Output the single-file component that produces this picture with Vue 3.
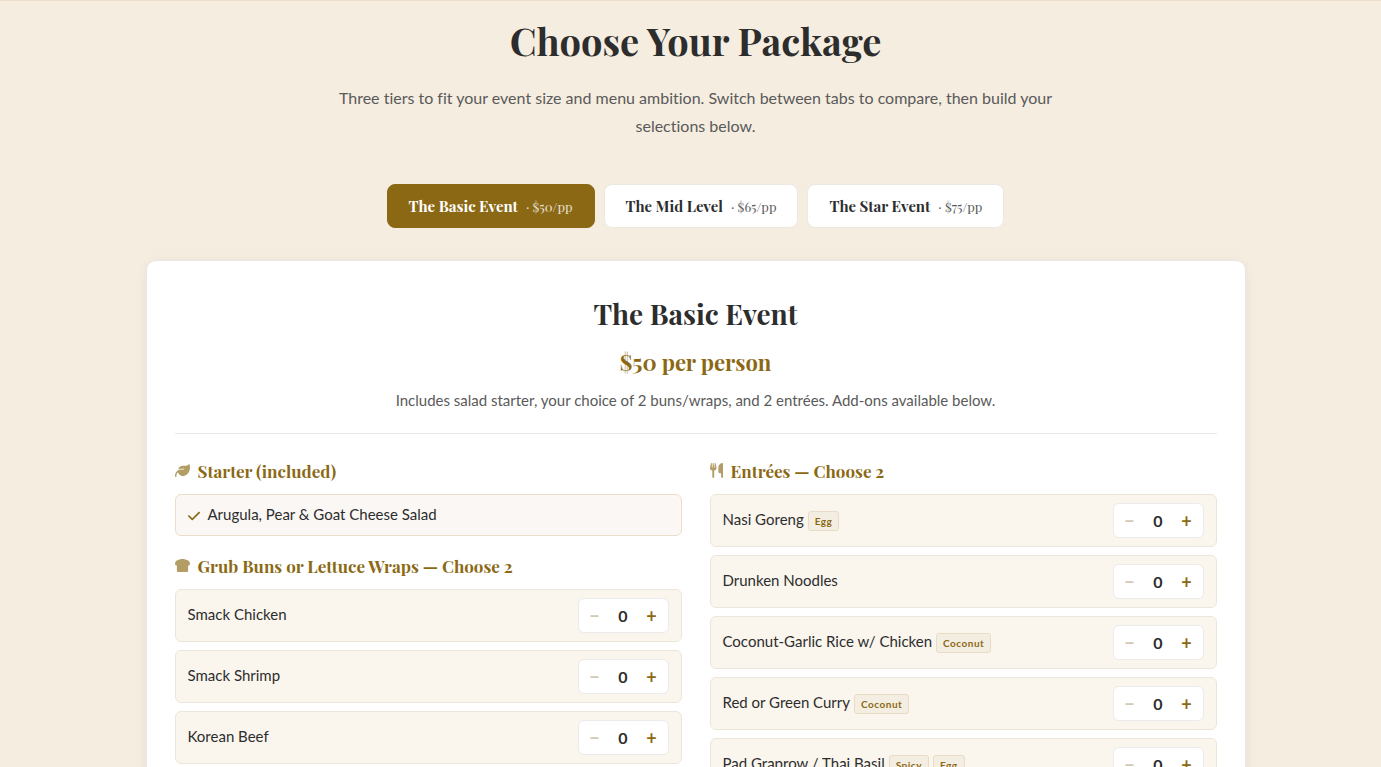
<script setup>
import { ref, computed } from 'vue';

// Packages shown in the tabs
const packages = [
  { id: 'basic', name: 'The Basic Event', price: 50 },
  { id: 'mid', name: 'The Mid Level', price: 65 },
  { id: 'star', name: 'The Star Event', price: 75 },
];

const activeId = ref('basic');
const activePackage = computed(() => packages.find((p) => p.id === activeId.value));

// Menu items with the quantity picked so far
const buns = ref([
  { name: 'Smack Chicken', qty: 0 },
  { name: 'Smack Shrimp', qty: 0 },
  { name: 'Korean Beef', qty: 0 },
]);

const entrees = ref([
  { name: 'Nasi Goreng', tags: ['Egg'], qty: 0 },
  { name: 'Drunken Noodles', tags: [], qty: 0 },
  { name: 'Coconut-Garlic Rice w/ Chicken', tags: ['Coconut'], qty: 0 },
  { name: 'Red or Green Curry', tags: ['Coconut'], qty: 0 },
  { name: 'Pad Graprow / Thai Basil', tags: ['Spicy', 'Egg'], qty: 0 },
]);

// Each list allows two choices
const isFull = (list) => list.reduce((sum, item) => sum + item.qty, 0) >= 2;
</script>

<template>
  <section class="packages">
    <header class="intro">
      <h1>Choose Your Package</h1>
      <p>Three tiers to fit your event size and menu ambition. Switch between tabs to compare, then build your selections below.</p>
    </header>

    <!-- Package tabs -->
    <div class="tabs" role="tablist">
      <button
        v-for="pkg in packages"
        :key="pkg.id"
        type="button"
        role="tab"
        class="tab"
        :class="{ active: pkg.id === activeId }"
        :aria-selected="pkg.id === activeId"
        @click="activeId = pkg.id"
      >
        <span>{{ pkg.name }}</span>
        <span class="tab-price">· ${{ pkg.price }}/pp</span>
      </button>
    </div>

    <div class="card">
      <div class="card-header">
        <h2>{{ activePackage.name }}</h2>
        <div class="price">${{ activePackage.price }} per person</div>
        <p>Includes salad starter, your choice of 2 buns/wraps, and 2 entrées. Add-ons available below.</p>
      </div>

      <div class="columns">
        <!-- Starter and buns -->
        <div class="column">
          <h3>
            <svg class="icon" viewBox="0 0 512 512" aria-hidden="true">
              <path d="M272 96c-78.6 0-145.1 51.5-167.7 122.5c33.6-17 71.5-26.5 111.7-26.5h88c8.8 0 16 7.2 16 16s-7.2 16-16 16H216c-16.6 0-32.7 1.9-48.3 5.4c-25.9 5.9-49.9 16.4-71.4 30.7C38.3 298.8 0 364.9 0 440v16c0 13.3 10.7 24 24 24s24-10.7 24-24V440c0-48.7 20.7-92.5 53.8-123.2C121.6 392.3 190.3 448 272 448l1 0c132.1-.7 239-130.9 239-291.4c0-42.6-7.5-83.1-21.1-119.6c-2.6-6.9-12.7-6.6-16.2-.1C455.9 72.1 418.7 96 376 96L272 96z" />
            </svg>
            Starter (included)
          </h3>
          <div class="included">
            <svg class="check" viewBox="0 0 448 512" aria-hidden="true">
              <path d="M438.6 105.4c12.5 12.5 12.5 32.8 0 45.3l-256 256c-12.5 12.5-32.8 12.5-45.3 0l-128-128c-12.5-12.5-12.5-32.8 0-45.3s32.8-12.5 45.3 0L160 338.7 393.4 105.4c12.5-12.5 32.8-12.5 45.3 0z" />
            </svg>
            <span>Arugula, Pear &amp; Goat Cheese Salad</span>
          </div>

          <h3>
            <svg class="icon" viewBox="0 0 512 512" aria-hidden="true">
              <path d="M256 32C192 32 0 64 0 192c0 35.3 28.7 64 64 64V432c0 26.5 21.5 48 48 48H400c26.5 0 48-21.5 48-48V256c35.3 0 64-28.7 64-64C512 64 320 32 256 32z" />
            </svg>
            Grub Buns or Lettuce Wraps — Choose 2
          </h3>
          <ul class="items">
            <li v-for="item in buns" :key="item.name" class="item">
              <span class="item-name">{{ item.name }}</span>
              <div class="stepper">
                <button type="button" :disabled="item.qty === 0" :aria-label="'Remove ' + item.name" @click="item.qty--">−</button>
                <span class="qty">{{ item.qty }}</span>
                <button type="button" :aria-label="'Add ' + item.name" :disabled="isFull(buns)" @click="item.qty++">+</button>
              </div>
            </li>
          </ul>
        </div>

        <!-- Entrées -->
        <div class="column">
          <h3>
            <svg class="icon icon-narrow" viewBox="0 0 448 512" aria-hidden="true">
              <path d="M416 0C400 0 288 32 288 176V288c0 35.3 28.7 64 64 64h32V480c0 17.7 14.3 32 32 32s32-14.3 32-32V32c0-17.7-14.3-32-32-32zM64 16C64 7.8 57.9 1 49.7 .1S34.2 4.6 32.4 12.5L2.1 148.8C.7 155.1 0 161.5 0 167.9c0 45.9 35.1 83.6 80 87.7V480c0 17.7 14.3 32 32 32s32-14.3 32-32V255.6c44.9-4.1 80-41.8 80-87.7c0-6.4-.7-12.8-2.1-19.1L191.6 12.5c-1.8-8-9.3-13.3-17.4-12.4S160 7.8 160 16V150.2c0 5.4-4.4 9.8-9.8 9.8c-5.1 0-9.3-3.9-9.8-9L127.9 14.6C127.2 6.3 120.3 0 112 0s-15.2 6.3-15.9 14.6L83.7 151c-.5 5.1-4.7 9-9.8 9c-5.4 0-9.8-4.4-9.8-9.8V16z" />
            </svg>
            Entrées — Choose 2
          </h3>
          <ul class="items">
            <li v-for="item in entrees" :key="item.name" class="item">
              <div class="item-info">
                <span class="item-name">{{ item.name }}</span>
                <span v-for="tag in item.tags" :key="tag" class="tag">{{ tag }}</span>
              </div>
              <div class="stepper">
                <button type="button" :disabled="item.qty === 0" :aria-label="'Remove ' + item.name" @click="item.qty--">−</button>
                <span class="qty">{{ item.qty }}</span>
                <button type="button" :aria-label="'Add ' + item.name" :disabled="isFull(entrees)" @click="item.qty++">+</button>
              </div>
            </li>
          </ul>
        </div>
      </div>
    </div>
  </section>
</template>

<style>
body {
  background: #f5ede0;
}
</style>

<style scoped>
* {
  box-sizing: border-box;
}

.packages {
  padding: 17px 20px 60px 30px;
  border-top: 1px solid #ebddca;
  background: #f5ede0;
  color: #2d2d2d;
  font-family: Lato, sans-serif;
  font-variant-ligatures: no-common-ligatures;
}

h1,
h2,
h3,
p,
ul {
  margin: 0;
  padding: 0;
}

h1,
h2,
h3,
.price,
.tab {
  font-family: 'Playfair Display', 'Liberation Serif', serif;
  font-weight: 700;
}

.intro {
  max-width: 720px;
  margin: 0 auto 44px;
  text-align: center;
}

h1 {
  margin-bottom: 20px;
  font-size: 38px;
  line-height: 46px;
}

.intro p {
  color: #5a5a5a;
  font-size: 16px;
  line-height: 28px;
}

.tabs {
  display: flex;
  justify-content: center;
  gap: 9px;
  margin-bottom: 32px;
}

.tab {
  display: flex;
  align-items: baseline;
  gap: 8px;
  height: 44px;
  padding: 11px 21px;
  border: 1px solid #ece8e2;
  border-radius: 8px;
  background: #fff;
  color: #2d2d2d;
  font-size: 15px;
  line-height: 20px;
  cursor: pointer;
}

.tab.active {
  border-color: #8b6914;
  background: #8b6914;
  color: #fff;
}

.tab-price {
  font-size: 13px;
  font-weight: 400;
  opacity: 0.8;
}

.card {
  max-width: 1100px;
  margin: 0 auto;
  padding: 28px;
  border: 1px solid #e8e8e8;
  border-radius: 10px;
  background: #fff;
  box-shadow: 0 2px 12px rgba(0, 0, 0, 0.06);
}

.card-header {
  margin-bottom: 23px;
  padding-bottom: 19px;
  border-bottom: 1px solid #e8e8e8;
  text-align: center;
}

h2 {
  margin-bottom: 11px;
  font-size: 28px;
  line-height: 50px;
}

.price {
  margin-bottom: 12px;
  color: #8b6914;
  font-size: 22px;
  line-height: 24px;
}

.card-header p {
  color: #5a5a5a;
  font-size: 15px;
  line-height: 28px;
}

.columns {
  display: grid;
  grid-template-columns: 1fr 1fr;
  gap: 28px;
}

h3 {
  display: flex;
  align-items: center;
  gap: 8px;
  margin-bottom: 9px;
  color: #8b6914;
  font-size: 17px;
  line-height: 28px;
}

.icon {
  width: 15px;
  height: 15px;
  margin-bottom: 2px;
  fill: #8b6914;
  opacity: 0.65;
}

.icon-narrow {
  width: 13px;
}

.included {
  display: flex;
  align-items: center;
  gap: 8px;
  height: 42px;
  margin-bottom: 16px;
  padding: 0 12px 2px;
  border: 1px solid #ebddca;
  border-radius: 6px;
  background: #faf7f4;
  font-size: 15px;
}

.check {
  width: 12px;
  height: 14px;
  margin-top: 4px;
  fill: #8b6914;
}

.items {
  display: grid;
  gap: 8px;
  list-style: none;
}

.item {
  display: flex;
  align-items: center;
  justify-content: space-between;
  padding: 8px 12px;
  border: 1px solid #ece6da;
  border-radius: 6px;
  background: #faf6ee;
}

.item-info {
  display: flex;
  align-items: center;
  gap: 4px;
}

.item-name {
  padding-bottom: 4px;
  font-size: 15px;
  line-height: 24px;
}

.tag {
  padding: 0 6px;
  border: 1px solid #e8dcc6;
  border-radius: 3px;
  background: #f4eee2;
  color: #8b6914;
  font-size: 10px;
  font-weight: 700;
  line-height: 18px;
  letter-spacing: 0.5px;
}

.stepper {
  display: flex;
  align-items: center;
  height: 35px;
  padding: 0 2px;
  border: 1px solid #ebebeb;
  border-radius: 6px;
  background: #fff;
}

.stepper button {
  width: 28px;
  height: 28px;
  padding: 0;
  border: 0;
  background: none;
  color: #8b6914;
  font-family: Lato, sans-serif;
  font-size: 18px;
  font-weight: 700;
  line-height: 28px;
  cursor: pointer;
}

.stepper button:disabled {
  color: #d3c9b5;
  cursor: default;
}

.qty {
  width: 29px;
  font-size: 16px;
  font-weight: 700;
  text-align: center;
}

@media (max-width: 760px) {
  .columns {
    grid-template-columns: 1fr;
  }

  .tabs {
    flex-wrap: wrap;
  }
}
</style>
